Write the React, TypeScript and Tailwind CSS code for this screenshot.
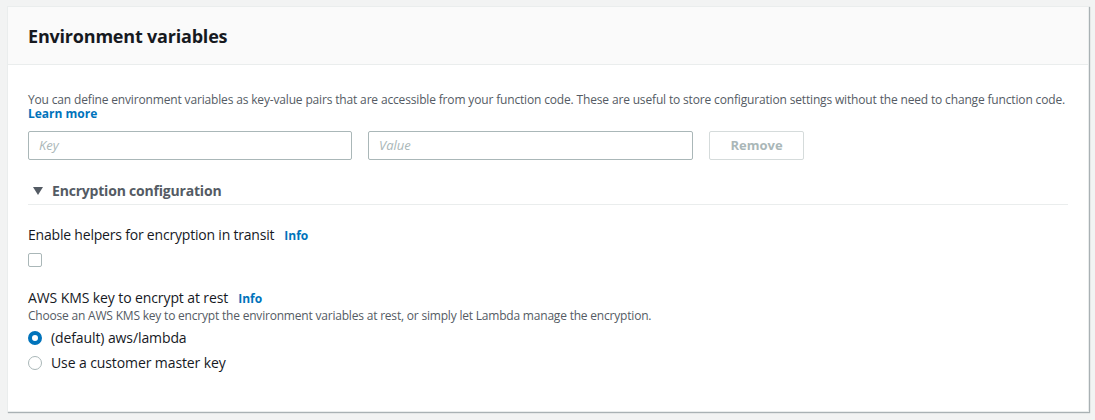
export default function App() {
  return (
    <main
      className="w-[1095px] h-[420px] bg-[#f2f3f3] pt-[6px] pl-[7px] overflow-hidden"
      style={{ fontFamily: '"Open Sans", Roboto, sans-serif' }}
    >
      <div className="w-[1082px] h-[406px] bg-white border border-[#eaeded] shadow-[1px_1px_1px_0_rgba(0,28,36,0.3)]">
        {/* Header */}
        <div className="h-[58px] bg-[#fafafa] border-b border-[#eaeded] flex items-center px-[20px]">
          <h2 className="text-[18px] font-bold text-[#16191f] tracking-[-0.2px] pt-[2px]">Environment variables</h2>
        </div>

        <div className="px-[20px] pt-[28px]">
          <p className="text-[12px] leading-[14px] text-[#545b64] tracking-[-0.16px] whitespace-nowrap">
            You can define environment variables as key-value pairs that are accessible from your function code. These are useful to store configuration settings without the need to change function code.
          </p>
          <a className="block text-[12px] leading-[14px] font-bold text-[#0073bb]">Learn more</a>

          {/* Key / value row */}
          <div className="flex gap-[16px] mt-[10px]">
            <div className="w-[324px] h-[29px] border border-[#aab7b8] rounded-[2px] flex items-center px-[10px]">
              <span className="text-[13px] italic text-[#aab7b8]">Key</span>
            </div>
            <div className="w-[325px] h-[29px] border border-[#aab7b8] rounded-[2px] flex items-center px-[10px]">
              <span className="text-[13px] italic text-[#aab7b8]">Value</span>
            </div>
            <div className="w-[95px] h-[29px] border border-[#d5dbdb] rounded-[2px] flex items-center justify-center">
              <span className="text-[13px] font-bold text-[#aab7b8]">Remove</span>
            </div>
          </div>

          {/* Encryption configuration */}
          <div className="mt-[20px] w-[1040px] border-b border-[#eaeded] pb-[3px] flex items-center gap-[9px] pl-[5px]">
            <svg width="10" height="8" viewBox="0 0 10 8">
              <path d="M0 0 L10 0 L5 8 Z" fill="#545b64" />
            </svg>
            <span className="text-[14px] font-bold text-[#545b64] tracking-[-0.2px]">Encryption configuration</span>
          </div>

          {/* helpers */}
          <div className="mt-[19px] flex items-baseline gap-[10px]">
            <span className="text-[14px] text-[#16191f] tracking-[-0.2px]">Enable helpers for encryption in transit</span>
            <a className="text-[12px] font-bold text-[#0073bb]">Info</a>
          </div>
          <div className="mt-[8px] w-[14px] h-[14px] border border-[#aab7b8] rounded-[2px] bg-white" />

          {/* KMS */}
          <div className="mt-[20px] flex items-baseline gap-[10px]">
            <span className="text-[14px] text-[#16191f] tracking-[-0.1px]">AWS KMS key to encrypt at rest</span>
            <a className="text-[12px] font-bold text-[#0073bb]">Info</a>
          </div>
          <p className="mt-[1px] text-[12px] leading-[14px] text-[#545b64] tracking-[-0.2px]">
            Choose an AWS KMS key to encrypt the environment variables at rest, or simply let Lambda manage the encryption.
          </p>

          <div className="mt-[4px] flex flex-col gap-[4px]">
            <label className="flex items-center gap-[9px]">
              <span className="w-[14px] h-[14px] rounded-full border-[4px] border-[#0073bb] bg-white" />
              <span className="text-[14px] text-[#16191f] tracking-[-0.1px]">(default) aws/lambda</span>
            </label>
            <label className="flex items-center gap-[9px]">
              <span className="w-[14px] h-[14px] rounded-full border border-[#aab7b8] bg-white" />
              <span className="text-[14px] text-[#16191f] tracking-[-0.1px]">Use a customer master key</span>
            </label>
          </div>
        </div>
      </div>
    </main>
  );
}
